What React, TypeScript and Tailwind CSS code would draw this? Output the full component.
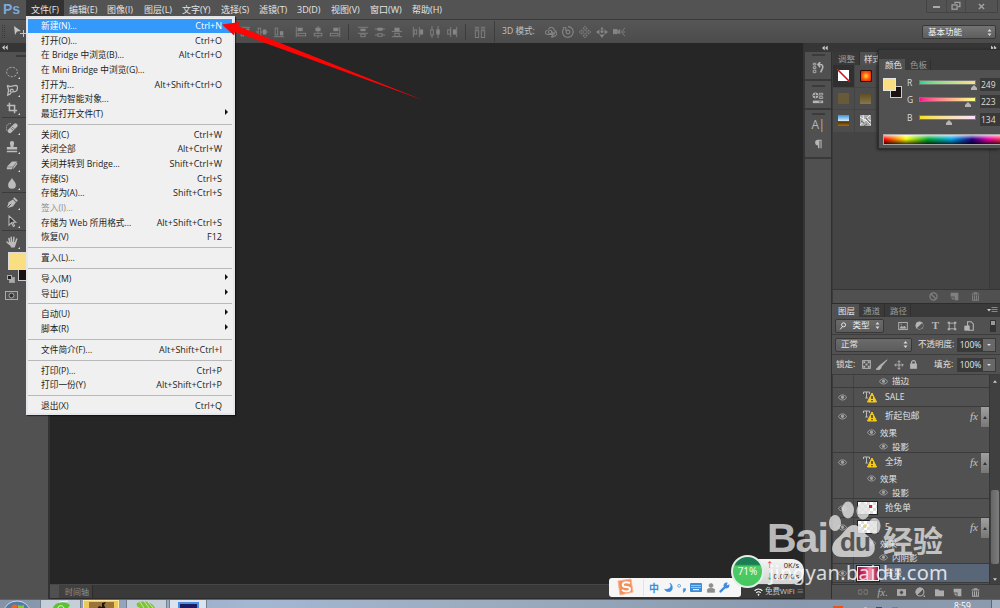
import type { ReactNode } from "react";

type MenuEntry = {
  label: string;
  keys?: string;
  sub?: boolean;
  active?: boolean;
  disabled?: boolean;
};

const topMenu = [
  { label: "文件(F)", cls: "w-[38px] pl-[5px] bg-[#323232]" },
  { label: "编辑(E)", cls: "w-[38px] pl-[5px]" },
  { label: "图像(I)", cls: "w-[37px] pl-[5px]" },
  { label: "图层(L)", cls: "w-[38px] pl-[5px]" },
  { label: "文字(Y)", cls: "w-[39px] pl-[5px]" },
  { label: "选择(S)", cls: "w-[38px] pl-[5px]" },
  { label: "滤镜(T)", cls: "w-[38px] pl-[5px]" },
  { label: "3D(D)", cls: "w-[34px] pl-[5px]" },
  { label: "视图(V)", cls: "w-[39px] pl-[5px]" },
  { label: "窗口(W)", cls: "w-[42px] pl-[5px]" },
  { label: "帮助(H)", cls: "w-[42px] pl-[5px]" },
];

const fileMenu: MenuEntry[][] = [
  [
    { label: "新建(N)...", keys: "Ctrl+N", active: true },
    { label: "打开(O)...", keys: "Ctrl+O" },
    { label: "在 Bridge 中浏览(B)...", keys: "Alt+Ctrl+O" },
    { label: "在 Mini Bridge 中浏览(G)..." },
    { label: "打开为...", keys: "Alt+Shift+Ctrl+O" },
    { label: "打开为智能对象..." },
    { label: "最近打开文件(T)", sub: true },
  ],
  [
    { label: "关闭(C)", keys: "Ctrl+W" },
    { label: "关闭全部", keys: "Alt+Ctrl+W" },
    { label: "关闭并转到 Bridge...", keys: "Shift+Ctrl+W" },
    { label: "存储(S)", keys: "Ctrl+S" },
    { label: "存储为(A)...", keys: "Shift+Ctrl+S" },
    { label: "签入(I)...", disabled: true },
    { label: "存储为 Web 所用格式...", keys: "Alt+Shift+Ctrl+S" },
    { label: "恢复(V)", keys: "F12" },
  ],
  [{ label: "置入(L)..." }],
  [
    { label: "导入(M)", sub: true },
    { label: "导出(E)", sub: true },
  ],
  [
    { label: "自动(U)", sub: true },
    { label: "脚本(R)", sub: true },
  ],
  [{ label: "文件简介(F)...", keys: "Alt+Shift+Ctrl+I" }],
  [
    { label: "打印(P)...", keys: "Ctrl+P" },
    { label: "打印一份(Y)", keys: "Alt+Shift+Ctrl+P" },
  ],
  [{ label: "退出(X)", keys: "Ctrl+Q" }],
];

const Icon = ({
  size = 14,
  className = "",
  children,
}: {
  size?: number;
  className?: string;
  children: ReactNode;
}) => (
  <svg
    width={size}
    height={size}
    viewBox="0 0 14 14"
    fill="none"
    stroke="currentColor"
    strokeWidth="1"
    className={`shrink-0 ${className}`}
  >
    {children}
  </svg>
);

const MenuBar = () => (
  <div className="flex h-[20px] shrink-0 items-stretch border-b border-[#3a3a3a] bg-[#535353] text-[#e4e4e4]">
    <div className="w-[26px] pl-[3px] font-['Liberation_Sans',sans-serif] text-[14px] leading-[18px] font-bold text-[#78a9dc]">
      Ps
    </div>
    {topMenu.map((m) => (
      <div
        key={m.label}
        className={`shrink-0 text-[9px] leading-[19px] whitespace-nowrap ${m.cls}`}
      >
        {m.label}
      </div>
    ))}
    <div className="mr-[2px] ml-auto flex h-[13px] w-[72px] rounded-b-[2px] border border-t-0 border-[#434343] text-[#a0a0a0]">
      <div className="flex w-[20px] items-center justify-center border-r border-[#474747]">
        <div className="mt-[2px] h-[2px] w-[7px] bg-[#aaa]" />
      </div>
      <div className="flex w-[19px] items-center justify-center border-r border-[#474747]">
        <Icon size={10}>
          <rect x="1.5" y="5.5" width="7" height="6" strokeWidth="1.8" />
          <path d="M5.5 4V2h7v6h-3" strokeWidth="1.8" />
        </Icon>
      </div>
      <div className="flex flex-1 items-center justify-center">
        <Icon size={9}>
          <path d="M3 3l8 8M11 3l-8 8" strokeWidth="2.4" />
        </Icon>
      </div>
    </div>
  </div>
);

const AlignIcon = ({ kind }: { kind: string }) => (
  <div className="flex w-[17px] shrink-0 justify-center">
    <Icon size={12}>
      {kind === "top" && (
        <g>
          <path d="M1 1.5h12" />
          <rect x="2.5" y="3.5" width="3" height="8" />
          <rect x="8" y="3" width="4" height="5" fill="currentColor" stroke="none" />
        </g>
      )}
      {kind === "mid" && (
        <g>
          <path d="M0 7h14" />
          <rect x="2.5" y="2.5" width="3" height="9" fill="#505050" />
          <rect x="8" y="4" width="4" height="6" fill="currentColor" stroke="none" />
        </g>
      )}
      {kind === "bottom" && (
        <g>
          <path d="M1 12.5h12" />
          <rect x="2.5" y="2.5" width="3" height="8" />
          <rect x="8" y="6" width="4" height="5" fill="currentColor" stroke="none" />
        </g>
      )}
      {kind === "left" && (
        <g>
          <path d="M1.5 1v12" />
          <rect x="3" y="2" width="6" height="4" fill="currentColor" stroke="none" />
          <rect x="3.5" y="8.5" width="9" height="3" />
        </g>
      )}
      {kind === "center" && (
        <g>
          <path d="M7 0v14" />
          <rect x="4" y="2" width="6" height="4" fill="currentColor" stroke="none" />
          <rect x="2.5" y="8.5" width="9" height="3" fill="#505050" />
        </g>
      )}
      {kind === "right" && (
        <g>
          <path d="M12.5 1v12" />
          <rect x="5" y="2" width="6" height="4" fill="currentColor" stroke="none" />
          <rect x="1.5" y="8.5" width="9" height="3" />
        </g>
      )}
      {kind === "dtop" && (
        <g>
          <path d="M1 1.5h12M1 8.5h12" />
          <rect x="4" y="3" width="6" height="3" fill="currentColor" stroke="none" />
          <rect x="4.5" y="9.5" width="5" height="3" />
        </g>
      )}
      {kind === "dmid" && (
        <g>
          <path d="M1 3.5h12M1 10.5h12" />
          <rect x="4" y="2" width="6" height="3.5" fill="currentColor" stroke="none" />
          <rect x="4.5" y="9" width="5" height="3" fill="#505050" />
        </g>
      )}
      {kind === "dbottom" && (
        <g>
          <path d="M1 6.5h12M1 12.5h12" />
          <rect x="4" y="2" width="6" height="4" fill="currentColor" stroke="none" />
          <rect x="4.5" y="8.5" width="5" height="3.5" />
        </g>
      )}
      {kind === "dleft" && (
        <g>
          <path d="M1.5 1v12M8.5 1v12" />
          <rect x="2.5" y="4.5" width="3" height="5" />
          <rect x="9" y="4" width="4" height="6" fill="currentColor" stroke="none" />
        </g>
      )}
      {kind === "dcenter" && (
        <g>
          <path d="M3.5 0v14M10.5 0v14" />
          <rect x="2" y="4.5" width="3" height="6" fill="#505050" />
          <rect x="8.5" y="4" width="4" height="6" fill="currentColor" stroke="none" />
        </g>
      )}
      {kind === "dright" && (
        <g>
          <path d="M5.5 1v12M12.5 1v12" />
          <rect x="2" y="4.5" width="3" height="5" />
          <rect x="8" y="4" width="4" height="6" fill="currentColor" stroke="none" />
        </g>
      )}
      {kind === "auto" && (
        <g>
          <path d="M1 1.5h5M1 3.5h5M8 1.5h5M8 3.5h5" />
          <rect x="1.5" y="5.5" width="4" height="8" />
          <rect x="8.5" y="5.5" width="4" height="8" />
        </g>
      )}
      {kind === "orbit" && (
        <g strokeWidth="1.2">
          <path d="M4 4c2-4 7-3 7 2M3 5C-1 6 0 10 4 10h5M12 6c3 2 2 5-1 6l-3 1M7 6l4 3 2-4M7 8l3 2-3 3" />
          <circle cx="6" cy="7" r="2" />
        </g>
      )}
      {kind === "roll" && (
        <g strokeWidth="1.3">
          <circle cx="7" cy="7" r="2.2" />
          <path d="M2 3a6.200 6.200 0 1 0 5-2.300M1 2h3.500v3.500" />
        </g>
      )}
      {kind === "pan" && (
        <path
          d="M7 0l2.500 3H8v3h3V4.500L14 7l-3 2.500V8H8v3h1.500L7 14l-2.500-3H6V8H3v1.500L0 7l3-2.500V6h3V3H4.500z"
          strokeWidth="0.8"
        />
      )}
      {kind === "slide" && (
        <g fill="currentColor" stroke="none">
          <circle cx="7" cy="6.500" r="1.800" />
          <path d="M7 1l2 3H5zM7 14l3-4H4zM0 7l4-3v6zM14 7l-4-3v6z" />
        </g>
      )}
      {kind === "camera" && (
        <g fill="currentColor">
          <path d="M0 4h5v5H0zM6 6l2-2v5L6 8z" />
          <path d="M14 2l-4 5 4 5M11 7h3" fill="none" />
        </g>
      )}
    </Icon>
  </div>
);

const VRule = ({ className = "" }: { className?: string }) => (
  <div className={`h-[16px] w-px shrink-0 bg-[#3c3c3c] ${className}`} />
);

const UpDown = () => (
  <svg width="5" height="7" viewBox="0 0 5 7" fill="#d8d8d8">
    <path d="M.5 2.500L2.500 0l2 2.500zM.5 4.500h4L2.500 7z" />
  </svg>
);

const OptionsBar = () => (
  <div className="flex h-[23px] shrink-0 items-center bg-gradient-to-b from-[#575757] to-[#4b4b4b] text-[#858585]">
    <div className="ml-[2px] h-[13px] w-[3px] border-x border-dotted border-[#3a3a3a]" />
    <svg width="14" height="12" viewBox="0 0 14 12" className="ml-[9px] text-[#c4c4c4]" fill="currentColor">
      <path d="M0 0l7 5-4 .5L1 9z" />
      <path d="M9.500 4v7M6 7.500h7" stroke="currentColor" />
    </svg>
    <div className="w-[208px] shrink-0" />
    <AlignIcon kind="top" />
    <AlignIcon kind="mid" />
    <AlignIcon kind="bottom" />
    <div className="w-[5px] shrink-0" />
    <AlignIcon kind="left" />
    <AlignIcon kind="center" />
    <AlignIcon kind="right" />
    <VRule className="mx-[5px]" />
    <AlignIcon kind="dtop" />
    <AlignIcon kind="dmid" />
    <AlignIcon kind="dbottom" />
    <div className="w-[4px] shrink-0" />
    <AlignIcon kind="dleft" />
    <AlignIcon kind="dcenter" />
    <AlignIcon kind="dright" />
    <VRule className="mx-[5px]" />
    <AlignIcon kind="auto" />
    <VRule className="mr-[7px] ml-[6px] h-[21px]" />
    <span className="w-[40px] shrink-0 text-[8.600px] whitespace-nowrap text-[#c0c0c0]">3D 模式:</span>
    <AlignIcon kind="orbit" />
    <AlignIcon kind="roll" />
    <AlignIcon kind="pan" />
    <AlignIcon kind="slide" />
    <AlignIcon kind="camera" />
    <div className="mt-[1px] mr-[4px] ml-auto flex h-[14px] w-[74px] items-center justify-between rounded-[2px] border border-[#383838] bg-gradient-to-b from-[#747474] to-[#5e5e5e] pr-[3px] pl-[5px] text-[8.5px] text-[#f2f2f2]">
      基本功能
      <UpDown />
    </div>
  </div>
);

const Tool = ({ className, children }: { className: string; children: ReactNode }) => (
  <div className={`flex shrink-0 items-center pl-[6px] text-[#bcbcbc] ${className}`}>
    <Icon size={12}>{children}</Icon>
    <span className="mt-[12px] h-0 w-0 border-b-2 border-l-2 border-b-[#ddd] border-l-transparent" />
  </div>
);

const ToolRule = () => <div className="ml-[2px] h-px w-[46px] shrink-0 bg-[#3b3b3b]" />;

const Toolbox = () => (
  <div className="flex w-[50px] shrink-0 flex-col border-r-2 border-[#333] bg-[#515151]">
    <div className="h-[9px] shrink-0 bg-[#363636] pl-[2px] text-[#c8c8c8]">
      <svg width="6" height="8" viewBox="0 0 6 8" fill="currentColor">
        <path d="M2.700 2v5L0 4.500zM5.700 2v5L3 4.500z" />
      </svg>
    </div>
    <div className="flex h-[10px] justify-center pt-[3px]">
      <div className="h-[2px] w-[17px] bg-[#3a3a3a]" />
    </div>
    <Tool className="h-[19px]">
      <ellipse cx="7" cy="7" rx="6.300" ry="5.500" strokeDasharray="2.500 1.500" />
    </Tool>
    <Tool className="h-[18px]">
      <path
        d="M1.500 1.500l3 1.500 7-1.500c3 0 2 6 0 7L6 9.500C4 9 5 6 7 6l2 1.500M1.500 1.500L3 7l-1 6 4-2"
        strokeWidth="1.500"
      />
    </Tool>
    <Tool className="h-[18px]">
      <path d="M4 1v9h9M1 4h9v9" strokeWidth="1.800" />
    </Tool>
    <ToolRule />
    <Tool className="h-[20px]">
      <path d="M4.500 10.500l6.500-6.500" strokeWidth="5" strokeLinecap="round" />
      <path d="M1 10C-1 5 2 1 6 2" strokeDasharray="1.500 1" />
      <path d="M5.500 7.500l3 2M7 6l3 2" stroke="#555" strokeWidth="0.800" />
    </Tool>
    <Tool className="h-[18px]">
      <path d="M4.500 2.500a2.500 2.500 0 0 1 5 0L8.500 7H13v3H1V7h4.500zM1 11.500h12V13H1z" fill="currentColor" stroke="none" />
    </Tool>
    <Tool className="h-[18px]">
      <path d="M1 9l6-6h6l-5 6zM1 9.500v2.500h6l1-2.500zM8.500 12L13 6V3.500l-4.500 6z" fill="currentColor" stroke="none" />
    </Tool>
    <Tool className="h-[18px]">
      <path d="M7 1c1 3 4.500 5 4.500 8.300a4.500 4.500 0 0 1-9 0C2.500 6 6 4 7 1z" fill="currentColor" stroke="none" />
    </Tool>
    <ToolRule />
    <Tool className="h-[19px]">
      <path d="M1 13L3 6l5-3 3.500 3.500L8 11z" fill="currentColor" stroke="none" />
      <path d="M1 13l5-5" stroke="#444" />
      <path d="M9 1l4 4" strokeWidth="2.300" />
    </Tool>
    <Tool className="h-[18px]">
      <path d="M3.500 1v11l3-3 2 4.500 1.500-1L8 8.500h3.500z" fill="#333" strokeWidth="1.200" />
    </Tool>
    <ToolRule />
    <Tool className="h-[21px]">
      <path
        d="M4.500 8L3.500 3M6.500 7L6 1.500M8.700 7l.5-5.500M11 8l1.500-4.500M4 9.500L1.200 7"
        strokeWidth="1.800"
        strokeLinecap="round"
      />
      <path d="M3.500 7h8.300c0 3-1 4-1.800 6.500H6C5 11 4 10 3.500 7z" fill="currentColor" stroke="none" />
    </Tool>
    <div className="relative h-[28px] w-[40px] shrink-0">
      <div className="absolute top-[10px] left-[18px] h-[19px] w-[18px] border border-[#ccc] bg-[#1b1111]" />
      <div className="absolute top-0 left-[8px] h-[18px] w-[18px] border border-[#ddd] bg-[#fade82]" />
      <div className="absolute top-[25px] left-[9px] h-[6px] w-[6px] border border-[#999] bg-[#aaa]" />
      <div className="absolute top-[23px] left-[7px] h-[5px] w-[5px] border border-[#aaa] bg-[#222]" />
    </div>
    <svg width="13" height="9" viewBox="0 0 13 9" className="mt-[11px] ml-[5px] shrink-0" fill="none" stroke="#aaa">
      <rect x="0.500" y="0.500" width="12" height="8" />
      <circle cx="6.500" cy="4.500" r="2.500" fill="#333" />
    </svg>
  </div>
);

const Workspace = () => (
  <div className="flex w-[753px] shrink-0 flex-col bg-[#262626]">
    <div className="flex-1" />
    <div className="flex h-[15px] shrink-0 border-t border-b border-[#474747] border-b-[#2c2c2c] bg-[#393939] text-[#8f8f8f]">
      <div className="w-[9px] bg-[#505050]" />
      <div className="w-[34px] border-r border-[#2c2c2c] bg-[#404040] pl-[6px] text-[8px] leading-[13px] whitespace-nowrap">
        时间轴
      </div>
    </div>
  </div>
);

const Grip = () => <div className="h-[2px] w-[13px] bg-[#3b3b3b]" />;

const IconDock = () => (
  <div className="mr-px flex w-[26px] shrink-0 flex-col bg-[#505050] text-[#b6b6b6]">
    <div className="flex h-[29px] flex-col items-center border-b-2 border-[#393939] pt-[2px]">
      <Grip />
      <Icon className="mt-[6px]" size={12}>
        <path d="M1.500 1.500h3v2h-3zM1.500 5.500h3v2h-3zM1.500 9.500h3v3h-3z" />
        <path d="M8 3h2c3 0 3 3 2 5l-2 4M9.500 0L7 3l2.500 3" strokeWidth="1.800" />
      </Icon>
    </div>
    <div className="flex h-[29px] flex-col items-center border-b-2 border-[#393939] pt-[4px]">
      <Grip />
      <Icon className="mt-[5px]" size={12}>
        <circle cx="4" cy="4" r="3" fill="currentColor" />
        <path d="M4 1v6M1 4h6" stroke="#555" />
        <path d="M8.500 1.500h4v2h-4zM8.500 5.500h4v2h-4z" />
        <path d="M1 10h12v3H1z" fill="currentColor" stroke="none" />
        <path d="M8 11.500h3" stroke="#555" />
      </Icon>
    </div>
    <div className="flex h-[49px] flex-col items-center border-b-2 border-[#393939] pt-[3px]">
      <Grip />
      <div className="mt-[2px] text-[12px] leading-[16px] tracking-[-0.500px]">A|</div>
      <Icon size={10} className="mt-[6px]">
        <path d="M7 1a4 4 0 0 0 0 8zM7 1h5v12h-1.500V2.500H9V13H7z" fill="currentColor" stroke="none" />
      </Icon>
    </div>
  </div>
);

const StyleCell = ({ children, dark }: { children: ReactNode; dark?: boolean }) => (
  <div className={`flex h-[21.500px] w-[21px] items-center justify-center ${dark ? "bg-[#303030]" : "bg-[#4c4c4c]"}`}>
    {children}
  </div>
);

const NewIcon = () => (
  <Icon size={9}>
    <path d="M1 1h12v12H7V7H1z" fill="currentColor" stroke="none" />
    <path d="M1 8.500h4.500V13z" fill="currentColor" stroke="none" />
  </Icon>
);

const TrashIcon = () => (
  <Icon size={9}>
    <path d="M1 3h12M5 2.500V1h4v1.500" strokeWidth="1.600" />
    <path d="M2.500 5v8h9V5M5.500 5v7M8.500 5v7" strokeWidth="1.600" />
  </Icon>
);

const StylesPanel = () => (
  <div className="flex h-[251px] shrink-0 flex-col border-l border-[#3b3b3b] bg-[#444]">
    <div className="flex h-[13px] shrink-0 bg-[#393939] text-[8.5px] leading-[13px] whitespace-nowrap">
      <div className="w-[27px] border-r border-[#2f2f2f] pl-[5px] text-[#999]">调整</div>
      <div className="w-[34px] bg-[#505050] pl-[4px] text-[#e6e6e6]">样式</div>
    </div>
    <div className="flex flex-1">
      <div className="grid w-[65px] grid-cols-[21px_21px_21px] content-start gap-px">
        <StyleCell dark>
          <svg width="15" height="15" viewBox="0 0 15 15">
            <rect x="2" y="2" width="11" height="11" fill="#fff" />
            <path d="M1 1l13 13" stroke="#c8141c" strokeWidth="1.600" />
          </svg>
        </StyleCell>
        <StyleCell>
          <div className="h-[12px] w-[12px] rounded-[1px] border border-[#2a0a05] bg-[radial-gradient(#ffe02a,#ff5a12_50%,#e01505)]" />
        </StyleCell>
        <StyleCell>{null}</StyleCell>
        <StyleCell>
          <div className="h-[11px] w-[11px] bg-[#675a38]" />
        </StyleCell>
        <StyleCell>
          <div className="h-[11px] w-[11px] bg-gradient-to-b from-[#5b4a25] to-[#8a7748]" />
        </StyleCell>
        <StyleCell>{null}</StyleCell>
        <StyleCell>
          <div className="h-[11px] w-[11px] bg-[linear-gradient(#3c91da,#d5f0ff_55%,#4a2c04_60%,#b06a08)]" />
        </StyleCell>
        <StyleCell>
          <svg width="11" height="11" viewBox="0 0 11 11">
            <rect width="11" height="11" fill="#aaa" />
            <path d="M0 2l5 3 5-5M0 10l6-5 5 5M3 0l1 6M7 4l4 2" stroke="#eee" fill="none" />
            <path d="M6 3l4 5M1 6l3 2M7 9l-3 2" stroke="#666" fill="none" />
          </svg>
        </StyleCell>
        <StyleCell>{null}</StyleCell>
      </div>
      <div className="ml-auto w-[11px] border-l border-[#3a3a3a] bg-[#404040]" />
    </div>
    <div className="flex h-[14px] shrink-0 items-center border-t border-[#363636] bg-[#505050] text-[#808080]">
      <div className="ml-auto flex w-[71px] items-center gap-[12px]">
        <Icon size={9}>
          <circle cx="7" cy="7" r="5.500" strokeWidth="2" />
          <path d="M3.500 3.500l7 7" strokeWidth="2" />
        </Icon>
        <NewIcon />
        <TrashIcon />
      </div>
    </div>
  </div>
);

const Eye = ({ className = "" }: { className?: string }) => (
  <svg width="9" height="7" viewBox="0 0 9 7" className={`shrink-0 ${className}`} fill="none" stroke="#a6a6a6">
    <path d="M0.500 3.500C2 0 7 0 8.500 3.500C7 6.800 2 6.800 .5 3.500z" strokeWidth="0.900" />
    <circle cx="4.500" cy="3.300" r="1.200" fill="#a6a6a6" />
  </svg>
);

const WarnText = () => (
  <svg width="14" height="12" viewBox="0 0 14 12" className="ml-[9px] shrink-0">
    <path d="M.5 3V1h6v2M3.500 1v6M2.300 7h2.500" stroke="#bbb" fill="none" />
    <path d="M9 2l4.500 9h-9z" fill="#f6cc1c" stroke="#f6cc1c" strokeLinejoin="round" />
    <path d="M9 5v3M9 9v1.200" stroke="#222" strokeWidth="1.300" />
  </svg>
);

const LayerRow = ({
  name,
  thumb,
  fx,
  selected,
  children,
}: {
  name: string;
  thumb: ReactNode;
  fx?: boolean;
  selected?: boolean;
  children?: ReactNode;
}) => (
  <div className={`flex shrink-0 border-b border-[#3b3b3b] ${selected ? "bg-[#596678]" : ""}`}>
    <div className="flex w-[21px] shrink-0 border-r border-[#424242] bg-[#505050] pt-[6px] pl-[5px]">
      <Eye />
    </div>
    <div className="flex-1">
      <div className="flex h-[18px] items-center">
        <div className="flex w-[31px] shrink-0 items-center">{thumb}</div>
        <span className="flex-1 text-[8.600px] whitespace-nowrap">{name}</span>
        {fx && (
          <>
            <span className="w-[11px] font-['Liberation_Serif',serif] text-[11px] leading-[14px] text-[#c4c4c4] italic">
              fx
            </span>
            <span className="mt-[2px] flex h-[20px] w-[8px] items-center justify-center bg-gradient-to-b from-[#a0a0a0] to-[#777]">
              <svg width="4" height="3" viewBox="0 0 4 3">
                <path d="M0 3l2-3 2 3z" fill="#333" />
              </svg>
            </span>
          </>
        )}
      </div>
      {children}
    </div>
  </div>
);

const Effects = ({ name }: { name: string }) => (
  <div className="flex flex-col text-[8.5px] leading-[13px]">
    <div className="flex h-[15px] items-center gap-[4px] pl-[13px]">
      <Eye />
      效果
    </div>
    <div className="flex h-[12px] items-center gap-[4px] pl-[25px]">
      <Eye />
      {name}
    </div>
  </div>
);

const Checker = ({ children }: { children?: ReactNode }) => (
  <div className="ml-[3px] h-[14px] w-[21px] border border-[#222] bg-white bg-[conic-gradient(#ddd_25%,#fff_0_50%,#ddd_0_75%,#fff_0)] bg-[length:6px_6px]">
    {children}
  </div>
);

const Percent = () => (
  <div className="flex h-[14px] w-[39px] shrink-0 border border-[#3a3a3a] text-[#e6e6e6]">
    <div className="w-[25px] bg-[#393939] text-center text-[8.5px] leading-[12px]">100%</div>
    <div className="flex flex-1 items-center justify-center bg-[#686868]">
      <svg width="4" height="2" viewBox="0 0 4 2">
        <path d="M0 0h4L2 2z" fill="#ddd" />
      </svg>
    </div>
  </div>
);

const LayersPanel = () => (
  <div className="flex flex-1 flex-col border-t border-[#2d2d2d] bg-[#515151] text-[#e2e2e2]">
    <div className="flex h-[13px] shrink-0 bg-[#3a3a3a] text-[8.5px] leading-[13px] whitespace-nowrap text-[#9a9a9a]">
      <div className="w-[27px] bg-[#515151] pl-[6px] text-[#e6e6e6]">图层</div>
      <div className="w-[26px] border-r border-[#2f2f2f] pl-[4px]">通道</div>
      <div className="w-[26px] border-r border-[#2f2f2f] pl-[5px]">路径</div>
      <svg width="11" height="8" viewBox="0 0 11 8" className="mt-[2px] mr-[2px] ml-auto">
        <path d="M0 3h4L2 5.500z" fill="#ccc" />
        <path d="M4.500 1.500h6M4.500 3.500h6M4.500 5.500h6" stroke="#888" />
      </svg>
    </div>
    <div className="flex h-[18px] shrink-0 items-center border-b border-[#3d3d3d] pl-[3px] text-[#b5b5b5]">
      <div className="mr-[14px] flex h-[14px] w-[49px] items-center justify-between rounded-[2px] border border-[#383838] bg-gradient-to-b from-[#6b6b6b] to-[#5c5c5c] px-[3px] text-[8.5px] text-[#eee]">
        <Icon size={8}>
          <circle cx="8" cy="5" r="3.500" strokeWidth="1.600" />
          <path d="M6 8l-4 5" strokeWidth="1.600" />
        </Icon>
        类型
        <UpDown />
      </div>
      <div className="flex w-[76px] items-center justify-between">
        <Icon size={10}>
          <rect x="1" y="2" width="12" height="10" strokeWidth="1.300" />
          <path d="M3 10l2-3 2 2 2-2 2 3z" fill="currentColor" />
          <path d="M3.500 4.500h2" />
        </Icon>
        <Icon size={9}>
          <circle cx="7" cy="7" r="5.800" fill="currentColor" />
          <path d="M11 3A5.500 5.500 0 0 1 3 11z" fill="#555" stroke="none" />
        </Icon>
        <span className="font-['Liberation_Serif',serif] text-[11px] leading-[11px] font-bold">T</span>
        <Icon size={10}>
          <path d="M3 3h8v8H3z" strokeWidth="1.300" />
          <path d="M1 1h3v3H1zM10 1h3v3h-3zM1 10h3v3H1zM10 10h3v3h-3z" fill="currentColor" stroke="none" />
        </Icon>
        <Icon size={10}>
          <path d="M5 1h5l3 3v9H7V7H5z" strokeWidth="1.500" />
          <path d="M1 7h6v6H1z" fill="currentColor" />
        </Icon>
      </div>
      <div className="mr-[4px] ml-auto h-[12px] w-[6px] border border-[#333] bg-gradient-to-b from-[#999] from-40% to-[#333] to-45%" />
    </div>
    <div className="flex h-[20px] shrink-0 items-center border-b border-[#3d3d3d] pl-[3px] text-[8.5px] whitespace-nowrap">
      <div className="mr-[6px] flex h-[14px] w-[77px] items-center justify-between rounded-[2px] border border-[#383838] bg-gradient-to-b from-[#6b6b6b] to-[#5c5c5c] pr-[3px] pl-[5px]">
        正常
        <UpDown />
      </div>
      <span className="flex-1">不透明度:</span>
      <div className="mr-[4px]">
        <Percent />
      </div>
    </div>
    <div className="flex h-[20px] shrink-0 items-center border-b border-[#3d3d3d] pl-[4px] text-[8.5px] whitespace-nowrap">
      <span className="w-[26px]">锁定:</span>
      <div className="flex w-[56px] items-center justify-between text-[#b5b5b5]">
        <Icon size={9}>
          <rect x="1" y="1" width="12" height="12" strokeWidth="1.500" />
          <path d="M2 2h3v3H2zM9 2h3v3H9zM5.500 5.500h3v3h-3zM2 9h3v3H2zM9 9h3v3H9z" fill="currentColor" stroke="none" />
        </Icon>
        <Icon size={12}>
          <path d="M13 1L6 9 4.500 7.500z" fill="currentColor" />
          <path d="M5 8c-3 0-2 3-5 4 4 1 6 0 6-3z" fill="currentColor" />
        </Icon>
        <Icon size={10}>
          <path d="M7 1v12M1 7h12M5 3l2-2 2 2M5 11l2 2 2-2M3 5L1 7l2 2M11 5l2 2-2 2" strokeWidth="1.300" />
        </Icon>
        <Icon size={9}>
          <rect x="2" y="6" width="10" height="7" fill="currentColor" />
          <path d="M4 6V4a3 3 0 0 1 6 0v2" strokeWidth="1.800" />
        </Icon>
      </div>
      <span className="ml-auto w-[23px]">填充:</span>
      <div className="mr-[4px]">
        <Percent />
      </div>
    </div>
    <div className="flex h-[209px] shrink-0 overflow-hidden">
      <div className="flex w-[157px] shrink-0 flex-col border-l border-[#3b3b3b]">
        <div className="flex h-[13px] shrink-0 items-center border-b border-[#3b3b3b] text-[8.5px]">
          <div className="h-full w-[21px] border-r border-[#424242]" />
          <Eye className="mr-[4px] ml-[25px]" />
          描边
        </div>
        <LayerRow name="SALE" thumb={<WarnText />} />
        <LayerRow name="折起包邮" fx thumb={<WarnText />}>
          <Effects name="投影" />
        </LayerRow>
        <LayerRow name="全场" fx thumb={<WarnText />}>
          <Effects name="投影" />
        </LayerRow>
        <LayerRow
          name="抢免单"
          thumb={
            <Checker>
              <div className="mt-[3px] ml-[11px] h-[3px] w-[3px] bg-[#d8232b]" />
            </Checker>
          }
        />
        <LayerRow
          name="5"
          fx
          thumb={
            <Checker>
              <div className="mt-[4px] ml-[5px] h-[3px] w-[3px] bg-[#e8dc50]" />
            </Checker>
          }
        >
          <Effects name="内阴影" />
        </LayerRow>
        <LayerRow
          name="背景"
          selected
          thumb={
            <div className="ml-[3px] h-[15px] w-[22px] border border-[#eee] bg-[linear-gradient(90deg,#8e1537,#e33c6c_40%,#f18fae_60%,#971a38)] outline outline-[#222]" />
          }
        />
      </div>
      <div className="flex flex-1 flex-col items-center border-l border-[#363636] bg-[#404040]">
        <svg width="4" height="3" viewBox="0 0 5 3" className="mt-[5px] shrink-0">
          <path d="M0 3l2.500-3L5 3z" fill="#ccc" />
        </svg>
        <div className="mt-[107px] h-[74px] w-[8px] shrink-0 rounded-[2px] bg-gradient-to-r from-[#666] to-[#7d7d7d]" />
        <svg width="4" height="3" viewBox="0 0 5 3" className="mt-auto mb-[3px] shrink-0">
          <path d="M0 0h5L2.500 3z" fill="#ccc" />
        </svg>
      </div>
    </div>
    <div className="flex flex-1 items-center justify-between border-t border-[#3a3a3a] pr-[20px] pl-[26px] text-[#acacac]">
      <Icon size={10} className="text-[#777]">
        <path d="M6 4H3a3 3 0 0 0 0 6h3M8 4h3a3 3 0 0 1 0 6H8M4 7h6" strokeWidth="1.600" />
      </Icon>
      <span className="font-['Liberation_Serif',serif] text-[11px] leading-[10px] italic">fx.</span>
      <Icon size={9}>
        <rect x="0" y="2" width="14" height="10" fill="currentColor" />
        <circle cx="7" cy="7" r="3" fill="#484848" />
      </Icon>
      <Icon size={10}>
        <circle cx="7" cy="7" r="5.500" strokeWidth="1.500" />
        <path d="M3 11A5.500 5.500 0 0 1 11 3z" fill="currentColor" />
        <path d="M13 12v2" strokeWidth="2" />
      </Icon>
      <Icon size={9}>
        <path d="M0 2h5l2 2h7v9H0z" fill="currentColor" stroke="none" />
      </Icon>
      <NewIcon />
      <TrashIcon />
    </div>
  </div>
);

const PanelColumn = () => (
  <div className="flex flex-1 flex-col">
    <div className="flex h-[9px] shrink-0 items-center bg-[#363636] text-[#c8c8c8]">
      <svg width="6" height="6" viewBox="0 0 6 6" className="ml-[17px]" fill="currentColor">
        <path d="M2.700 .5v5L0 3zM5.700 .5v5L3 3z" />
      </svg>
      <svg width="6" height="6" viewBox="0 0 6 6" className="mr-[3px] ml-auto" fill="currentColor">
        <path d="M0 .5v5L2.700 3zM3 .5v5L5.700 3z" />
      </svg>
    </div>
    <div className="flex flex-1">
      <IconDock />
      <div className="flex flex-1 flex-col">
        <StylesPanel />
        <LayersPanel />
      </div>
    </div>
  </div>
);

const sliders = [
  { name: "R", value: "249", bar: "bg-gradient-to-r from-[#12dc86] to-[#fbde88]", knob: "ml-[52px]" },
  { name: "G", value: "223", bar: "bg-gradient-to-r from-[#f9008a] to-[#f8ff86]", knob: "ml-[46px]" },
  { name: "B", value: "134", bar: "bg-gradient-to-r from-[#f9df00] to-[#f9dfff]", knob: "ml-[27px]" },
];

const ColorPanel = () => (
  <div className="absolute top-[49px] left-[878px] flex h-[100px] w-[122px] flex-col rounded-tl-[3px] border border-r-0 border-[#2e2e2e] bg-[#515151] text-[#ddd] shadow-[-1px_1px_3px_rgba(0,0,0,0.5)]">
    <div className="h-[9px] shrink-0 bg-[#3a3a3a]" />
    <div className="flex h-[11px] shrink-0 bg-[#3a3a3a] text-[8.500px] leading-[12px] whitespace-nowrap">
      <div className="w-[26px] bg-[#515151] pl-[6px] text-[#e6e6e6]">颜色</div>
      <div className="w-[26px] border-r border-[#2f2f2f] pl-[5px] text-[#999]">色板</div>
    </div>
    <div className="flex h-[62px] pt-[6px]">
      <div className="relative mt-[2px] ml-[4px] h-[21px] w-[20px]">
        <div className="absolute top-[8px] left-[7px] h-[12px] w-[12px] border border-[#ccc] bg-[#1b1111]" />
        <div className="absolute top-0 left-0 h-[13px] w-[13px] border border-[#e5e5e5] bg-[#fade82]" />
      </div>
      <div className="ml-[6px] flex flex-col">
        {sliders.map((s) => (
          <div key={s.name} className="flex h-[17.3px]">
            <span className="w-[12px] text-[8.500px] leading-[14px]">{s.name}</span>
            <div className="w-[61px] pt-[4px]">
              <div className={`h-[5px] w-[57px] border border-[#777] ${s.bar}`} />
              <svg width="6" height="5" viewBox="0 0 6 5" className={s.knob}>
                <path d="M3 0l3 3v2H0V3z" fill="#b5b5b5" />
              </svg>
            </div>
            <span className="mt-[2px] h-[13px] w-[20px] bg-[#393939] pl-[1px] text-[8.500px] leading-[14px]">
              {s.value}
            </span>
          </div>
        ))}
      </div>
    </div>
    <div className="mt-[2px] ml-[4px] h-[11px] border border-r-0 border-[#aaa] bg-[linear-gradient(rgba(255,255,255,0.75),transparent_45%,rgba(0,0,0,0.75)),linear-gradient(90deg,#f00,#ff0_19%,#0a3_38%,#0ae_58%,#208_76%,#e0a_90%,#f35)]" />
  </div>
);

const FileMenu = () => (
  <div className="absolute top-[16px] left-[26px] w-[209px] border-2 border-[#e4e6ea] bg-[#f0f0f0] pt-[0.500px] pr-[1px] text-[#1c1c1c] shadow-[1px_1px_1px_rgba(0,0,0,0.5)]">
    {fileMenu.map((group, i) => (
      <div key={group[0].label}>
        {i > 0 && (
          <div className="flex h-[6.100px] items-center">
            <div className="h-px w-full bg-[#b9b9b9]" />
          </div>
        )}
        {group.map((item) => (
          <div
            key={item.label}
            className={`flex h-[14.680px] items-center justify-between pr-[10px] pl-[13px] leading-[14px] whitespace-nowrap ${
              item.active ? "bg-[#3399fb] text-white" : item.disabled ? "text-[#8d8d8d]" : ""
            }`}
          >
            <span className="text-[8.700px]">{item.label}</span>
            {item.keys && <span className="text-[9px]">{item.keys}</span>}
            {item.sub && (
              <svg width="3" height="6" viewBox="0 0 3 6" className="mr-[-6px] mb-[4px]">
                <path d="M0 0l3 3-3 3z" fill="#111" />
              </svg>
            )}
          </div>
        ))}
      </div>
    ))}
  </div>
);

const Taskbar = () => (
  <div className="flex h-[9px] shrink-0 items-end overflow-hidden border-t border-[#5b636d] bg-[linear-gradient(90deg,#8592a6,#a4b7d2_25%,#9baabd_50%,#8798ae_80%,#8d9aad)]">
    <svg width="40" height="8" viewBox="0 0 40 8">
      <ellipse cx="17" cy="12" rx="13" ry="11" fill="#557c9f" stroke="#c9dae6" />
      <path d="M11 8c1-4 4-4 6-3v3z" fill="#ec6727" />
      <path d="M18 8V5c2 1 4 1 6 0v3z" fill="#8fc43d" />
    </svg>
    <div className="flex h-[8px] w-[41px] justify-center border-x border-[#72808f] bg-[#c5cfd9]">
      <svg width="22" height="8" viewBox="0 0 22 8">
        <path d="M3 8c1-6 12-8 17-3l-2 3z" fill="#5ac32d" />
        <path d="M9 2l9-1M8 8c0-3 5-3 6 0" stroke="#e8ffe0" fill="none" />
      </svg>
    </div>
    <div className="ml-[2px] flex h-[8px] w-[36px] justify-center border border-b-0 border-[#ffe89c] bg-[#edc85e]">
      <svg width="25" height="8" viewBox="0 0 25 8">
        <rect width="25" height="8" y="1" fill="#9a7439" />
        <path d="M8 8l2-3 3 1V2l4-1-2 3 2 4z" fill="#1d150c" />
      </svg>
    </div>
    <div className="ml-[7px] flex h-[8px] w-[41px] justify-center border-x border-[#72808f] bg-[#c5cfd9]">
      <svg width="22" height="8" viewBox="0 0 22 8">
        <path d="M1 3c8-3 15-1 18 5H4C1 7 0 5 1 3z" fill="#7fc13c" />
        <path d="M4 2l4 6M8 1l5 7M12 2l5 6" stroke="#dff0cb" strokeWidth="0.800" />
      </svg>
    </div>
    <div className="ml-[2px] flex h-[8px] w-[38px] items-end justify-center border-x border-[#72808f] bg-[#dce3ec]">
      <div className="h-[6px] w-[21px] border-2 border-b-0 border-[#4a8de0] bg-[#1c1a63]" />
    </div>
    <div className="ml-auto flex h-[8px] w-[167px] items-start text-white">
      <div className="mt-[6px] h-[3px] w-[10px] bg-[#e5551f]" />
      <div className="mt-[7px] ml-[21px] h-[2px] w-[3px] bg-[#c3d12b]" />
      <div className="mt-[7px] ml-[9px] h-[2px] w-[6px] bg-[#762c73]" />
      <div className="mt-[7px] ml-[10px] h-[2px] w-[6px] bg-[#5a9e33]" />
      <div className="ml-[56px] text-[8.500px] leading-[11px]">8:59</div>
      <div className="ml-auto h-[8px] w-[9px] border-l border-[#5d6877] bg-[#a3b0c2]" />
    </div>
  </div>
);

const ImeBar = () => (
  <div className="absolute top-[578px] left-[609px] flex h-[19px] w-[132px] items-center rounded-[3px] bg-[#f6f6f7] text-[#3f8dda]">
    <svg width="20" height="19" viewBox="0 0 20 19" className="ml-[7px]">
      <path d="M2 3l13-2 2 13-13 3z" fill="#f58f5a" stroke="#f9b795" />
      <path d="M14 5C9 3 6 5 7 8c1 2 7 0 7 3s-5 3-8 1" fill="none" stroke="#fff" strokeWidth="2" />
    </svg>
    <div className="ml-[7px] h-[17px] w-px bg-[#f2ddda]" />
    <span className="ml-[5px] w-[13px] text-[10px] leading-[14px] font-bold">中</span>
    <Icon size={9} className="ml-[2px]">
      <path d="M9 0c4 4 1 11-8 10 3 5 12 5 12-3 0-3-2-6-4-7z" fill="currentColor" />
    </Icon>
    <Icon size={10} className="ml-[4px]">
      <circle cx="3" cy="4" r="2" />
      <path d="M9 8h3c0 3-1 4-3 5z" fill="currentColor" />
    </Icon>
    <svg width="12" height="9" viewBox="0 0 12 9" className="ml-[3px]">
      <rect width="12" height="9" rx="1" fill="#3f8dda" />
      <path d="M1.500 2.500h9M1.500 4.500h9" stroke="#fff" strokeDasharray="1 1" />
      <path d="M3 6.700h6" stroke="#fff" />
    </svg>
    <Icon size={10} className="ml-[4px] text-[#8d8d8d]">
      <circle cx="7" cy="3.500" r="2.800" fill="currentColor" />
      <path d="M2 13V9c2-2 8-2 10 0v4z" fill="currentColor" />
    </Icon>
    <Icon size={11} className="ml-[3px]">
      <path d="M2 12l6-6" strokeWidth="3" strokeLinecap="round" />
      <path d="M12.500 4A3 3 0 1 1 10 1.500L9 4l1.500 1z" fill="currentColor" strokeWidth="1.500" />
    </Icon>
  </div>
);

const SpeedBall = () => (
  <div className="absolute top-[554px] left-[730px] h-[44px] w-[76px]">
    <div className="absolute top-[5px] left-[15px] flex h-[25px] w-[59px] flex-col justify-center rounded-r-[12px] bg-gradient-to-b from-[#f4f4f4] to-[#d4d4d4] pl-[21px] text-[7.500px] text-[#222]">
      <div className="flex h-[11px] items-center">
        <span className="text-[#e5372c]">↑</span>
        <span className="mr-[5px] ml-auto">0K/s</span>
      </div>
      <div className="flex h-[11px] items-center">
        <span className="text-[#2fa34a]">↓</span>
        <span className="mr-[5px] ml-auto">0.07K/s</span>
      </div>
    </div>
    <div className="absolute top-[1px] left-[1px] h-[33px] w-[33px] rounded-full border-2 border-[#e3eee6] bg-[linear-gradient(#1c7c53_25%,#4ccb69_32%,#46c75d)] text-center text-[10px] leading-[29px] text-white">
      71%
    </div>
    <div className="absolute top-[31px] left-[24px] flex items-center gap-[2px] text-[7.500px] leading-[13px] whitespace-nowrap text-[#ccc]">
      <Icon size={9} className="text-white">
        <path d="M1 6c3-4 9-4 12 0M3.500 9c2-2 5-2 7 0" strokeWidth="1.600" />
        <circle cx="7" cy="12" r="1" fill="currentColor" />
      </Icon>
      免费WiFi
      <span className="text-[#888]">≡</span>
    </div>
  </div>
);

const BrandMark = () => (
  <div className="absolute top-[498px] left-[766px] h-[90px] w-[182px] text-[#e2e2e2]/80">
    <div className="flex h-[64px] items-end">
      <span className="w-[62px] pl-px font-['Liberation_Sans',sans-serif] text-[41px] leading-[48px] font-bold tracking-[-1px]">
        Bai
      </span>
      <div className="relative h-[64px] w-[54px]">
        <svg width="54" height="64" viewBox="0 0 54 64" fill="currentColor">
          <ellipse cx="7" cy="25" rx="6" ry="8" />
          <ellipse cx="20" cy="12" rx="6" ry="8.500" />
          <ellipse cx="35" cy="13" rx="6.500" ry="8.500" />
          <ellipse cx="46.500" cy="28" rx="6" ry="8" />
          <path d="M26 27c6 0 9 7 14 11 10 7 9 21-3 21H14C2 59 1 46 11 39c6-5 8-12 15-12z" />
        </svg>
        <span className="absolute top-[30px] left-[12px] font-['Liberation_Sans',sans-serif] text-[26px] leading-[28px] font-bold tracking-[-1px] text-[#555]">
          du
        </span>
      </div>
      <span className="ml-[1px] text-[30px] leading-[43px] font-bold whitespace-nowrap">经验</span>
    </div>
    <div className="ml-[3px] font-['Noto_Sans',sans-serif] text-[20px] leading-[22px] tracking-[0.350px] whitespace-nowrap text-white/80">
      jingyan.baidu.com
    </div>
  </div>
);

const PointerArrow = () => (
  <svg width="208" height="84" viewBox="0 0 208 84" className="absolute top-[20px] left-[221px]">
    <path d="M1 4.500L19 2l-2 4 186 74.500L14 12l-1 3.500z" fill="#fd0505" />
  </svg>
);

export default function App() {
  return (
    <div className="relative flex h-[608px] w-[1000px] flex-col overflow-hidden bg-[#303030] font-['Open_Sans','Noto_Sans_CJK_SC',sans-serif]">
      <MenuBar />
      <OptionsBar />
      <div className="flex min-h-0 flex-1">
        <Toolbox />
        <Workspace />
        <div className="w-[2px] shrink-0 bg-[#343434]" />
        <PanelColumn />
      </div>
      <Taskbar />
      <ColorPanel />
      <FileMenu />
      <PointerArrow />
      <ImeBar />
      <SpeedBall />
      <BrandMark />
    </div>
  );
}
